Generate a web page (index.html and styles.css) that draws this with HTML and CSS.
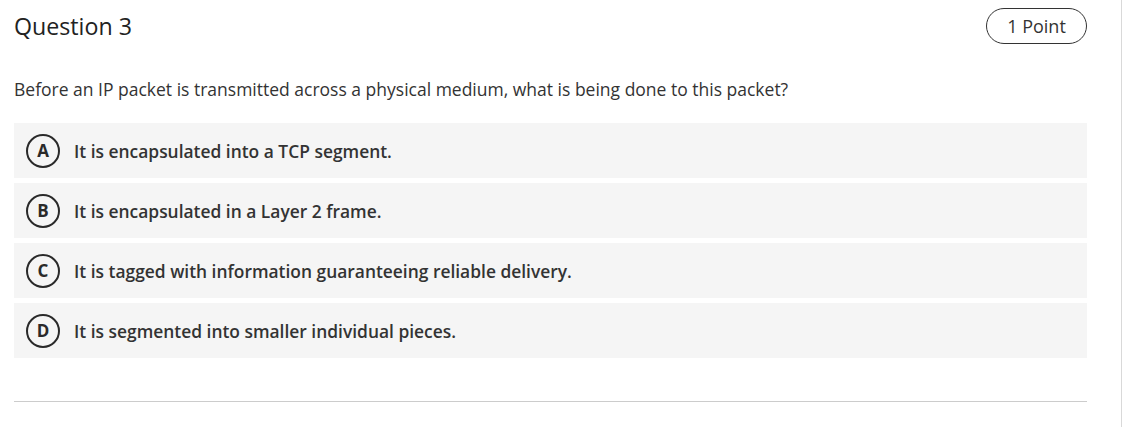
FILE: index.html
```html
<!DOCTYPE html>
<html>
<head>
<meta charset="utf-8">
<link rel="stylesheet" href="styles.css">
</head>
<body>
<div class="page">
  <div class="quiz">
    <div class="header">
      <h2 class="title">Question 3</h2>
      <span class="points">1 Point</span>
    </div>
    <p class="prompt">Before an IP packet is transmitted across a physical medium, what is being done to this packet?</p>
    <div class="options">
      <div class="option"><span class="letter">A</span><span class="text">It is encapsulated into a TCP segment.</span></div>
      <div class="option"><span class="letter">B</span><span class="text">It is encapsulated in a Layer 2 frame.</span></div>
      <div class="option"><span class="letter">C</span><span class="text">It is tagged with information guaranteeing reliable delivery.</span></div>
      <div class="option"><span class="letter">D</span><span class="text">It is segmented into smaller individual pieces.</span></div>
    </div>
    <div class="divider"></div>
  </div>
</div>
</body>
</html>
```
FILE: styles.css
```css
html, body {
  margin: 0;
  padding: 0;
  background: #ffffff;
}
body {
  font-family: "Open Sans", "Liberation Sans", sans-serif;
  color: #262626;
}
.page {
  width: 1122px;
  height: 427px;
  border-right: 1px solid #d9d9d9;
  box-sizing: border-box;
  padding: 8px 0 0 14px;
}
.quiz {
  width: 1073px;
}
.header {
  display: flex;
  justify-content: space-between;
  align-items: flex-start;
}
.title {
  margin: 0;
  font-size: 23.2px;
  font-weight: 400;
  line-height: 36px;
  color: #222;
}
.points {
  display: inline-flex;
  align-items: center;
  justify-content: center;
  box-sizing: border-box;
  width: 101px;
  height: 36px;
  border: 1px solid #333;
  border-radius: 18px;
  font-size: 18px;
  color: #333;
}
.prompt {
  margin: 33px 0 0 0;
  font-size: 17.5px;
  line-height: 24px;
  color: #333;
}
.options {
  margin-top: 22px;
  display: flex;
  flex-direction: column;
  gap: 5px;
}
.option {
  display: flex;
  align-items: center;
  height: 55px;
  background: #f5f5f5;
  padding-left: 12px;
}
.letter {
  display: inline-flex;
  align-items: center;
  justify-content: center;
  box-sizing: border-box;
  width: 34px;
  height: 34px;
  border: 2px solid #2a2a2a;
  border-radius: 50%;
  font-size: 17px;
  font-weight: 700;
  color: #2a2a2a;
  margin-right: 14px;
}
.text {
  font-size: 17.4px;
  font-weight: 600;
  color: #333;
}
.divider {
  margin-top: 43px;
  height: 1px;
  background: #cccccc;
}
```
